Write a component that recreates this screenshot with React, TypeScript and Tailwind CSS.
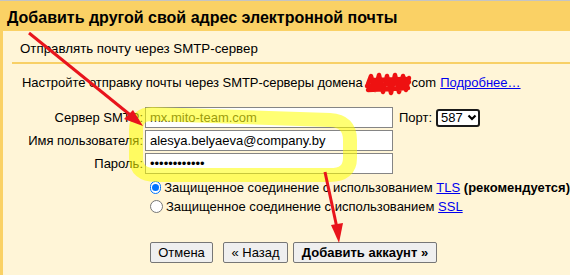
import React from "react";

export default function App() {
  return (
    <div className="relative w-[570px] h-[275px] overflow-hidden bg-[#fff5d7] font-['Liberation_Sans',Arial,sans-serif] text-black">
      <div className="border-t border-[#c4c4c4] h-[31px] bg-[#fad165] pl-[7px] pt-[9px]">
        <div className="text-[16px] font-bold leading-none whitespace-nowrap">Добавить другой свой адрес электронной почты</div>
      </div>
      <div className="border-l-[3px] border-[#fad165] h-[244px]">
        <div className="h-[31px] pt-[11px] pl-[17px] text-[13.3px] leading-none whitespace-nowrap">Отправлять почту через SMTP-сервер</div>
        <div className="ml-[9px] h-[2px] bg-[#f8d066]"></div>
        <div className="h-[43px] pt-[12px] pl-[19px] text-[13px] leading-none flex whitespace-nowrap">
          <span className="tracking-[-0.05px]">Настройте отправку почты через SMTP-серверы домена</span>
          <span className="inline-block w-[49px]"></span>
          <span>com</span>
          <span className="ml-[4px] text-[#0000ee] underline">Подробнее…</span>
        </div>
        <div className="grid grid-cols-[140px_248px_auto] gap-x-[2px] gap-y-[2px] items-center text-[13px]">
          <div className="text-right whitespace-nowrap">Сервер SMTP:</div>
          <div className="h-[21px] border border-[#858585] bg-white flex items-center px-[4px] text-[13px] text-[#222]">mx.mito-team.com</div>
          <div className="flex items-center pl-[4px]">
            <span>Порт:</span>
            <div className="ml-[4px] h-[18px] w-[44px] border-2 border-[#1a1a1a] rounded-[3px] bg-white flex items-center pl-[3px] text-[13px]">
              <span>587</span>
              <svg width="10" height="7" viewBox="0 0 10 7" className="ml-[4px]"><path d="M1.5 1.5 L5 5 L8.5 1.5" fill="none" stroke="#000" strokeWidth="2.2" /></svg>
            </div>
          </div>
          <div className="text-right whitespace-nowrap">Имя пользователя:</div>
          <div className="h-[21px] border border-[#858585] bg-white flex items-center px-[4px] text-[13px]">alesya.belyaeva@company.by</div>
          <div></div>
          <div className="text-right">Пароль:</div>
          <div className="h-[21px] border border-[#858585] bg-white flex items-center px-[4px] text-[13px]">••••••••••••</div>
          <div></div>
        </div>
        <div className="pl-[147px] mt-[4px] text-[13px] flex flex-col whitespace-nowrap">
          <div className="flex items-center h-[19px]">
            <span className="w-[13px] h-[13px] rounded-full border border-[#0075ff] bg-white flex items-center justify-center">
              <span className="w-[7px] h-[7px] rounded-full bg-[#0075ff]"></span>
            </span>
            <span className="ml-[3px]">Защищенное соединение с использованием <span className="text-[#0000ee] underline">TLS</span> <b>(рекомендуется)</b></span>
          </div>
          <div className="flex items-center h-[19px]">
            <span className="w-[13px] h-[13px] rounded-full border border-[#767676] bg-white"></span>
            <span className="ml-[3px]">Защищенное соединение с использованием <span className="text-[#0000ee] underline">SSL</span></span>
          </div>
        </div>
        <div className="pl-[147px] mt-[26px] flex items-center text-[13px]">
          <button className="h-[21px] w-[63px] border border-[#767676] rounded-[2px] bg-[#efefef] leading-none">Отмена</button>
          <button className="ml-[10px] h-[21px] w-[65px] border border-[#767676] rounded-[2px] bg-[#efefef] leading-none">« Назад</button>
          <button className="ml-[5px] h-[21px] w-[144px] border border-[#767676] rounded-[2px] bg-[#efefef] leading-none font-bold whitespace-nowrap">Добавить аккаунт »</button>
        </div>
      </div>
      <svg className="absolute inset-0 pointer-events-none" width="570" height="275" viewBox="0 0 570 275">
        <path d="M368 84 L371 76 L375 90 L379 75 L383 92 L387 76 L391 93 L395 75 L399 92 L403 76 L406 90 L409 78 M367 86 L409 82 M368 90 L408 88 M370 80 L406 79" fill="none" stroke="#ee1111" strokeWidth="4.5" strokeLinecap="round" strokeLinejoin="round" />
        <path d="M152 114 L330 120 Q350 121 350 140 L350 158 Q350 175 330 175 L156 175 Q136 175 136 158 L136 130 Q136 114 152 114 Z" fill="none" stroke="#ffff00" strokeOpacity="0.55" strokeWidth="14" strokeLinejoin="round" />
        <line x1="29" y1="33" x2="134" y2="118" stroke="#e8141c" strokeWidth="3" />
        <path d="M143 126 L124 119 L133 110 Z" fill="#e8141c" />
        <line x1="325" y1="172" x2="337" y2="228" stroke="#e8141c" strokeWidth="3" />
        <path d="M339 243 L331 225 L343 223 Z" fill="#e8141c" />
      </svg>
    </div>
  );
}
